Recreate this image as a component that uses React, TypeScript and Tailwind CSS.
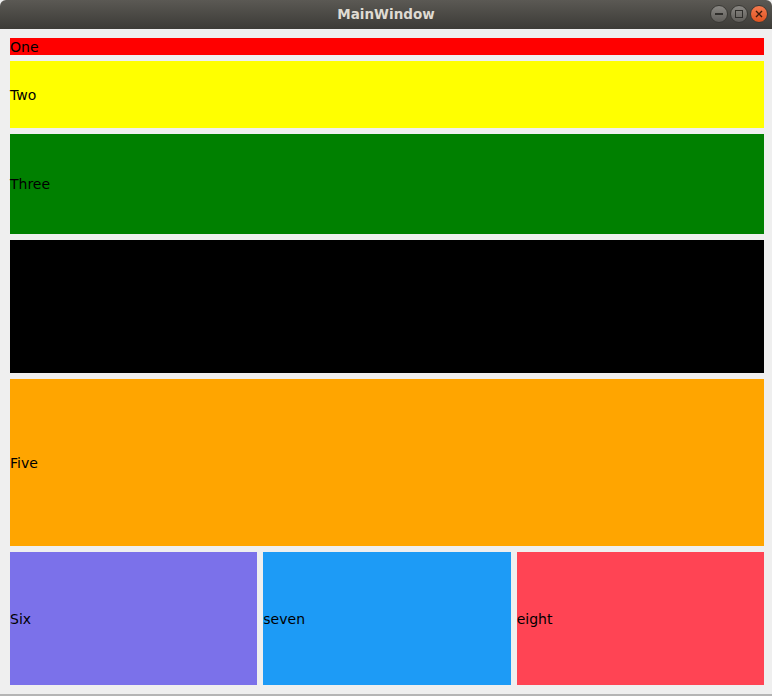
import React from 'react';

const Label: React.FC<{ className: string; text?: string }> = ({ className, text }) => (
  <div className={`flex items-center ${className}`}>
    <span className="text-[14px] leading-none text-black">{text}</span>
  </div>
);

const TitleBar: React.FC = () => (
  <div className="relative h-[29px] rounded-t-[6px] bg-gradient-to-b from-[#5b5954] to-[#3c3b37] flex items-center justify-center">
    <span className="text-[13.5px] font-bold text-[#dfdbd2]">MainWindow</span>
    <div className="absolute right-[4px] top-[5px] flex gap-[2px]">
      <div className="w-[18px] h-[18px] rounded-full bg-gradient-to-b from-[#8a8884] to-[#5f5d59] border border-[#3a3935] flex items-center justify-center">
        <div className="w-[8px] h-[2px] bg-[#2f2e2b]" />
      </div>
      <div className="w-[18px] h-[18px] rounded-full bg-gradient-to-b from-[#8a8884] to-[#5f5d59] border border-[#3a3935] flex items-center justify-center">
        <div className="w-[8px] h-[8px] border-[1.5px] border-[#2f2e2b]" />
      </div>
      <div className="w-[18px] h-[18px] rounded-full bg-gradient-to-b from-[#f47a4e] to-[#e0531e] border border-[#3a3935] flex items-center justify-center">
        <svg width="8" height="8" viewBox="0 0 8 8">
          <path d="M1 1L7 7M7 1L1 7" stroke="#3b1a0c" strokeWidth="1.4" />
        </svg>
      </div>
    </div>
  </div>
);

export default function App() {
  return (
    <div className="w-[772px] h-[696px] bg-[#3a3a3a] overflow-hidden" style={{ fontFamily: '"DejaVu Sans", sans-serif' }}>
      <div className="h-[694px] flex flex-col bg-[#efefef] border-b-2 border-[#b5b5b5] box-content">
        <TitleBar />
        <div className="flex flex-col gap-[6px] pt-[9px] pl-[10px] pr-[8px]">
          <Label className="h-[17px] bg-[#ff0000]" text="One" />
          <Label className="h-[67px] bg-[#ffff00]" text="Two" />
          <Label className="h-[100px] bg-[#008000]" text="Three" />
          <Label className="h-[133px] bg-black" text="Four" />
          <Label className="h-[167px] bg-[#ffa500]" text="Five" />
          <div className="grid grid-cols-3 gap-[6px] h-[133px]">
            <Label className="bg-[#7b71ea]" text="Six" />
            <Label className="bg-[#1d9bf6]" text="seven" />
            <Label className="bg-[#ff4454]" text="eight" />
          </div>
        </div>
      </div>
    </div>
  );
}
